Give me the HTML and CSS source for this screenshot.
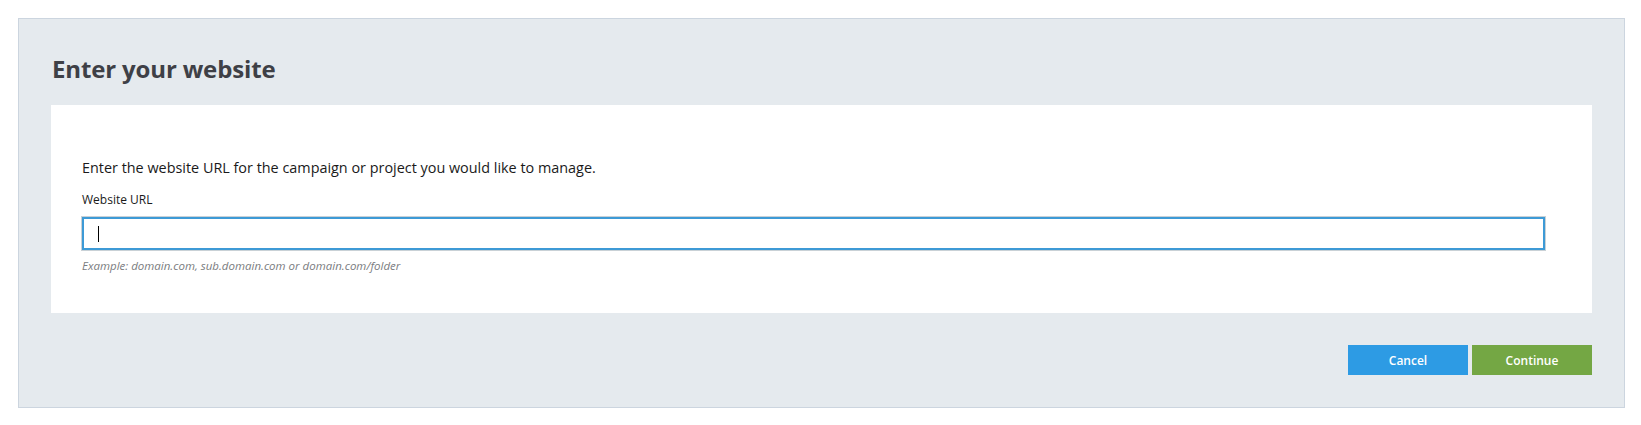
FILE: index.html
```html
<!DOCTYPE html>
<html lang="en">
<head>
<meta charset="utf-8">
<title>Enter your website</title>
<link rel="stylesheet" href="styles.css">
</head>
<body>
<div class="panel">
  <h1 class="title">Enter your website</h1>
  <div class="card">
    <p class="intro">Enter the website URL for the campaign or project you would like to manage.</p>
    <label class="label" for="url">Website URL</label>
    <div class="field">
      <input id="url" class="input" type="text">
      <span class="caret"></span>
    </div>
    <p class="hint">Example: domain.com, sub.domain.com or domain.com/folder</p>
  </div>
  <div class="actions">
    <button class="btn btn-cancel" type="button">Cancel</button>
    <button class="btn btn-continue" type="button">Continue</button>
  </div>
</div>
</body>
</html>
```

FILE: styles.css
```css
html, body {
  margin: 0;
  padding: 0;
  background: #ffffff;
}
body {
  padding: 18px 16px 0 18px;
  font-family: "Open Sans", "Noto Sans", sans-serif;
}
.panel {
  box-sizing: border-box;
  width: 1607px;
  height: 390px;
  background: #e5eaee;
  border: 1px solid #ccd5df;
  padding: 0 32px 32px 32px;
  display: flex;
  flex-direction: column;
}
.title {
  margin: 0;
  height: 87px;
  padding: 35px 0 0 1px;
  box-sizing: border-box;
  font-size: 24px;
  line-height: 30px;
  font-weight: 700;
  color: #3e4046;
  letter-spacing: -0.15px;
}
.card {
  background: #ffffff;
  height: 210px;
  box-sizing: border-box;
  padding: 52px 47px 0 31px;
  display: flex;
  flex-direction: column;
}
.intro {
  margin: 0;
  font-size: 14.4px;
  line-height: 22px;
  color: #1a1a1a;
}
.label {
  margin-top: 13px;
  font-size: 12px;
  line-height: 16px;
  color: #1a1a1a;
}
.field {
  position: relative;
  margin-top: 9px;
}
.input {
  display: block;
  box-sizing: border-box;
  width: 100%;
  height: 33px;
  margin: 0;
  border: 2px solid #3d9ad6;
  outline: 1px solid #c9d1d6;
  background: #fff;
  padding: 0 14px;
  font-family: inherit;
  font-size: 14px;
}
.caret {
  position: absolute;
  left: 16px;
  top: 9px;
  width: 1px;
  height: 16px;
  background: #000;
}
.hint {
  margin: 8px 0 0 0;
  font-size: 11.5px;
  line-height: 15px;
  font-style: italic;
  color: #7a7c80;
}
.actions {
  margin-top: 32px;
  display: flex;
  justify-content: flex-end;
  gap: 4px;
}
.btn {
  width: 120px;
  height: 30px;
  border: 0;
  margin: 0;
  padding: 0;
  color: #ffffff;
  font-family: "Open Sans", "Noto Sans", sans-serif;
  font-weight: 600;
  font-size: 12px;
}
.btn-cancel {
  background: #2d9be4;
}
.btn-continue {
  background: #74a744;
}
```
